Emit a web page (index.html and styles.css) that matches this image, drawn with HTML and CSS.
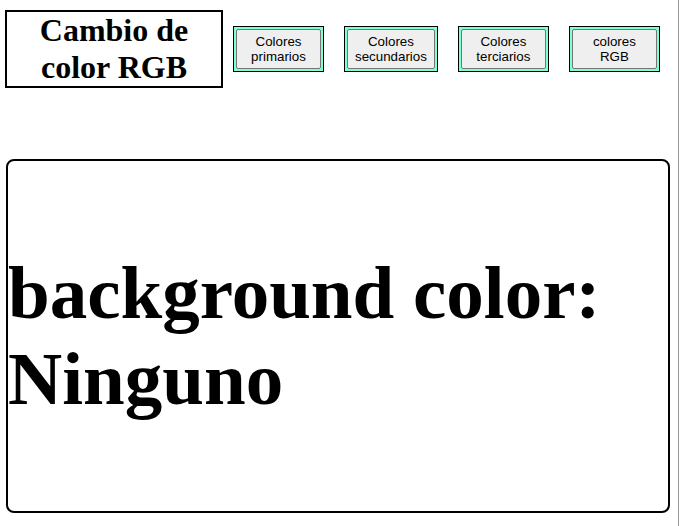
FILE: index.html
```html
<!DOCTYPE html>
<html lang="es">
<head>
<meta charset="utf-8">
<title>Cambio de color RGB</title>
<link rel="stylesheet" href="styles.css">
</head>
<body>
<div class="page">
  <header class="header">
    <h1 class="title">Cambio de color RGB</h1>
    <nav class="buttons">
      <div class="btn-wrap"><button class="btn">Colores<br>primarios</button></div>
      <div class="btn-wrap"><button class="btn">Colores<br>secundarios</button></div>
      <div class="btn-wrap"><button class="btn">Colores<br>terciarios</button></div>
      <div class="btn-wrap"><button class="btn">colores<br>RGB</button></div>
    </nav>
  </header>
  <main class="display">
    <h1 class="display-text">background color: Ninguno</h1>
  </main>
</div>
</body>
</html>
```
FILE: styles.css
```css
html, body {
  margin: 0;
  padding: 0;
  background: #fff;
}
.page {
  box-sizing: border-box;
  width: 679px;
  height: 526px;
  border-right: 1px solid #9a9a9a;
  padding: 10px 0 0 5px;
  font-family: "Liberation Serif", "Times New Roman", serif;
  color: #000;
}
.header {
  display: flex;
  align-items: center;
  gap: 10px;
}
.title {
  box-sizing: border-box;
  width: 218px;
  margin: 0;
  border: 2px solid #000;
  font-size: 32px;
  font-weight: bold;
  line-height: normal;
  text-align: center;
}
.buttons {
  display: flex;
  align-items: center;
  gap: 20px;
}
.btn-wrap {
  border: 1px solid #000;
  background: #7fffd4;
  padding: 2px;
  display: flex;
}
.btn {
  box-sizing: border-box;
  min-width: 85px;
  padding: 4px 7px;
  background: #efefef;
  border: 1px solid #767676;
  border-radius: 2px;
  font-family: "Liberation Sans", Arial, sans-serif;
  font-size: 13.333px;
  line-height: 15px;
  color: #000;
  text-align: center;
}
.display {
  box-sizing: border-box;
  margin: 71px 0 0 1px;
  width: 664px;
  height: 354px;
  border: 2px solid #000;
  border-radius: 8px;
  display: flex;
  align-items: center;
}
.display-text {
  margin: 0;
  font-size: 75px;
  font-weight: bold;
  line-height: normal;
}
```
